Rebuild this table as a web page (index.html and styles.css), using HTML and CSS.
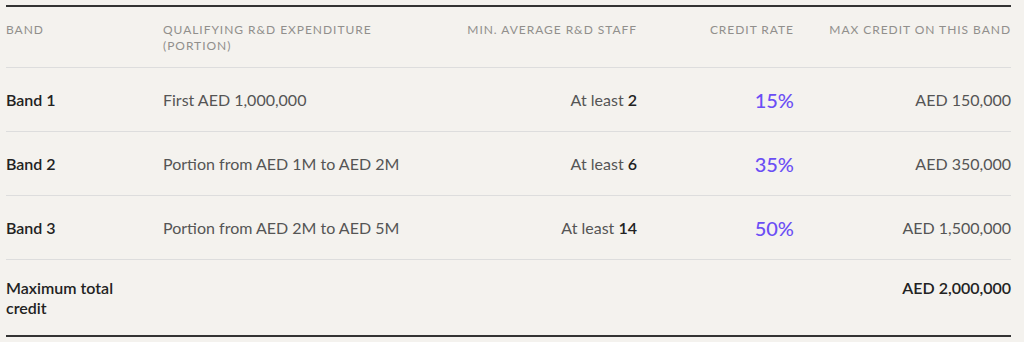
FILE: index.html
```html
<!DOCTYPE html>
<html lang="en">
<head>
<meta charset="utf-8">
<title>R&amp;D credit bands</title>
<link rel="stylesheet" href="styles.css">
</head>
<body>
<table class="bands">
  <colgroup>
    <col class="c-band">
    <col class="c-exp">
    <col class="c-staff">
    <col class="c-rate">
    <col class="c-max">
  </colgroup>
  <thead>
    <tr>
      <th class="left">Band</th>
      <th class="left">Qualifying R&amp;D expenditure (portion)</th>
      <th class="right">Min. average R&amp;D staff</th>
      <th class="right">Credit rate</th>
      <th class="right">Max credit on this band</th>
    </tr>
  </thead>
  <tbody>
    <tr>
      <td class="name">Band 1</td>
      <td>First AED 1,000,000</td>
      <td class="right">At least <b>2</b></td>
      <td class="right rate">15%</td>
      <td class="right">AED 150,000</td>
    </tr>
    <tr>
      <td class="name">Band 2</td>
      <td>Portion from AED 1M to AED 2M</td>
      <td class="right">At least <b>6</b></td>
      <td class="right rate">35%</td>
      <td class="right">AED 350,000</td>
    </tr>
    <tr>
      <td class="name">Band 3</td>
      <td>Portion from AED 2M to AED 5M</td>
      <td class="right">At least <b>14</b></td>
      <td class="right rate">50%</td>
      <td class="right">AED 1,500,000</td>
    </tr>
    <tr class="total">
      <td class="name">Maximum total credit</td>
      <td></td>
      <td></td>
      <td></td>
      <td class="right name">AED 2,000,000</td>
    </tr>
  </tbody>
</table>
</body>
</html>
```

FILE: styles.css
```css
html, body {
  margin: 0;
  background: #f4f2ee;
}
body {
  padding: 5px 13px 0 6px;
  font-family: "Lato", "Liberation Sans", sans-serif;
}
.bands {
  width: 1005px;
  border-collapse: collapse;
  table-layout: fixed;
  border-top: 2px solid #333;
  border-bottom: 2px solid #333;
}
.c-band { width: 157px; }
.c-exp { width: 300px; }
.c-staff { width: 174px; }
.c-rate { width: 157px; }
.c-max { width: 217px; }

th {
  font-weight: 400;
  font-size: 12px;
  line-height: 16px;
  letter-spacing: 0.08em;
  text-transform: uppercase;
  color: #918f8c;
  vertical-align: top;
  padding: 15px 0 13px;
  border-bottom: 1px solid #ddd;
}
th.left, td { text-align: left; }
th:first-child, td:first-child { padding-right: 16px; }
th:nth-child(2) { padding-right: 40px; }
.right { text-align: right; }

td {
  font-size: 16px;
  line-height: 22px;
  color: #555;
  padding: 21px 0 20px;
  vertical-align: middle;
  border-bottom: 1px solid #ddd;
}
td.name { color: #222; font-weight: 600; }
td b { color: #222; font-weight: 600; }
td.rate {
  color: #6b4ef5;
  font-size: 20px;
  font-weight: 500;
}
.total td {
  vertical-align: top;
  line-height: 20px;
  padding: 18px 0 17px;
  border-bottom: none;
}
.total td:first-child { padding-right: 16px; }
```
